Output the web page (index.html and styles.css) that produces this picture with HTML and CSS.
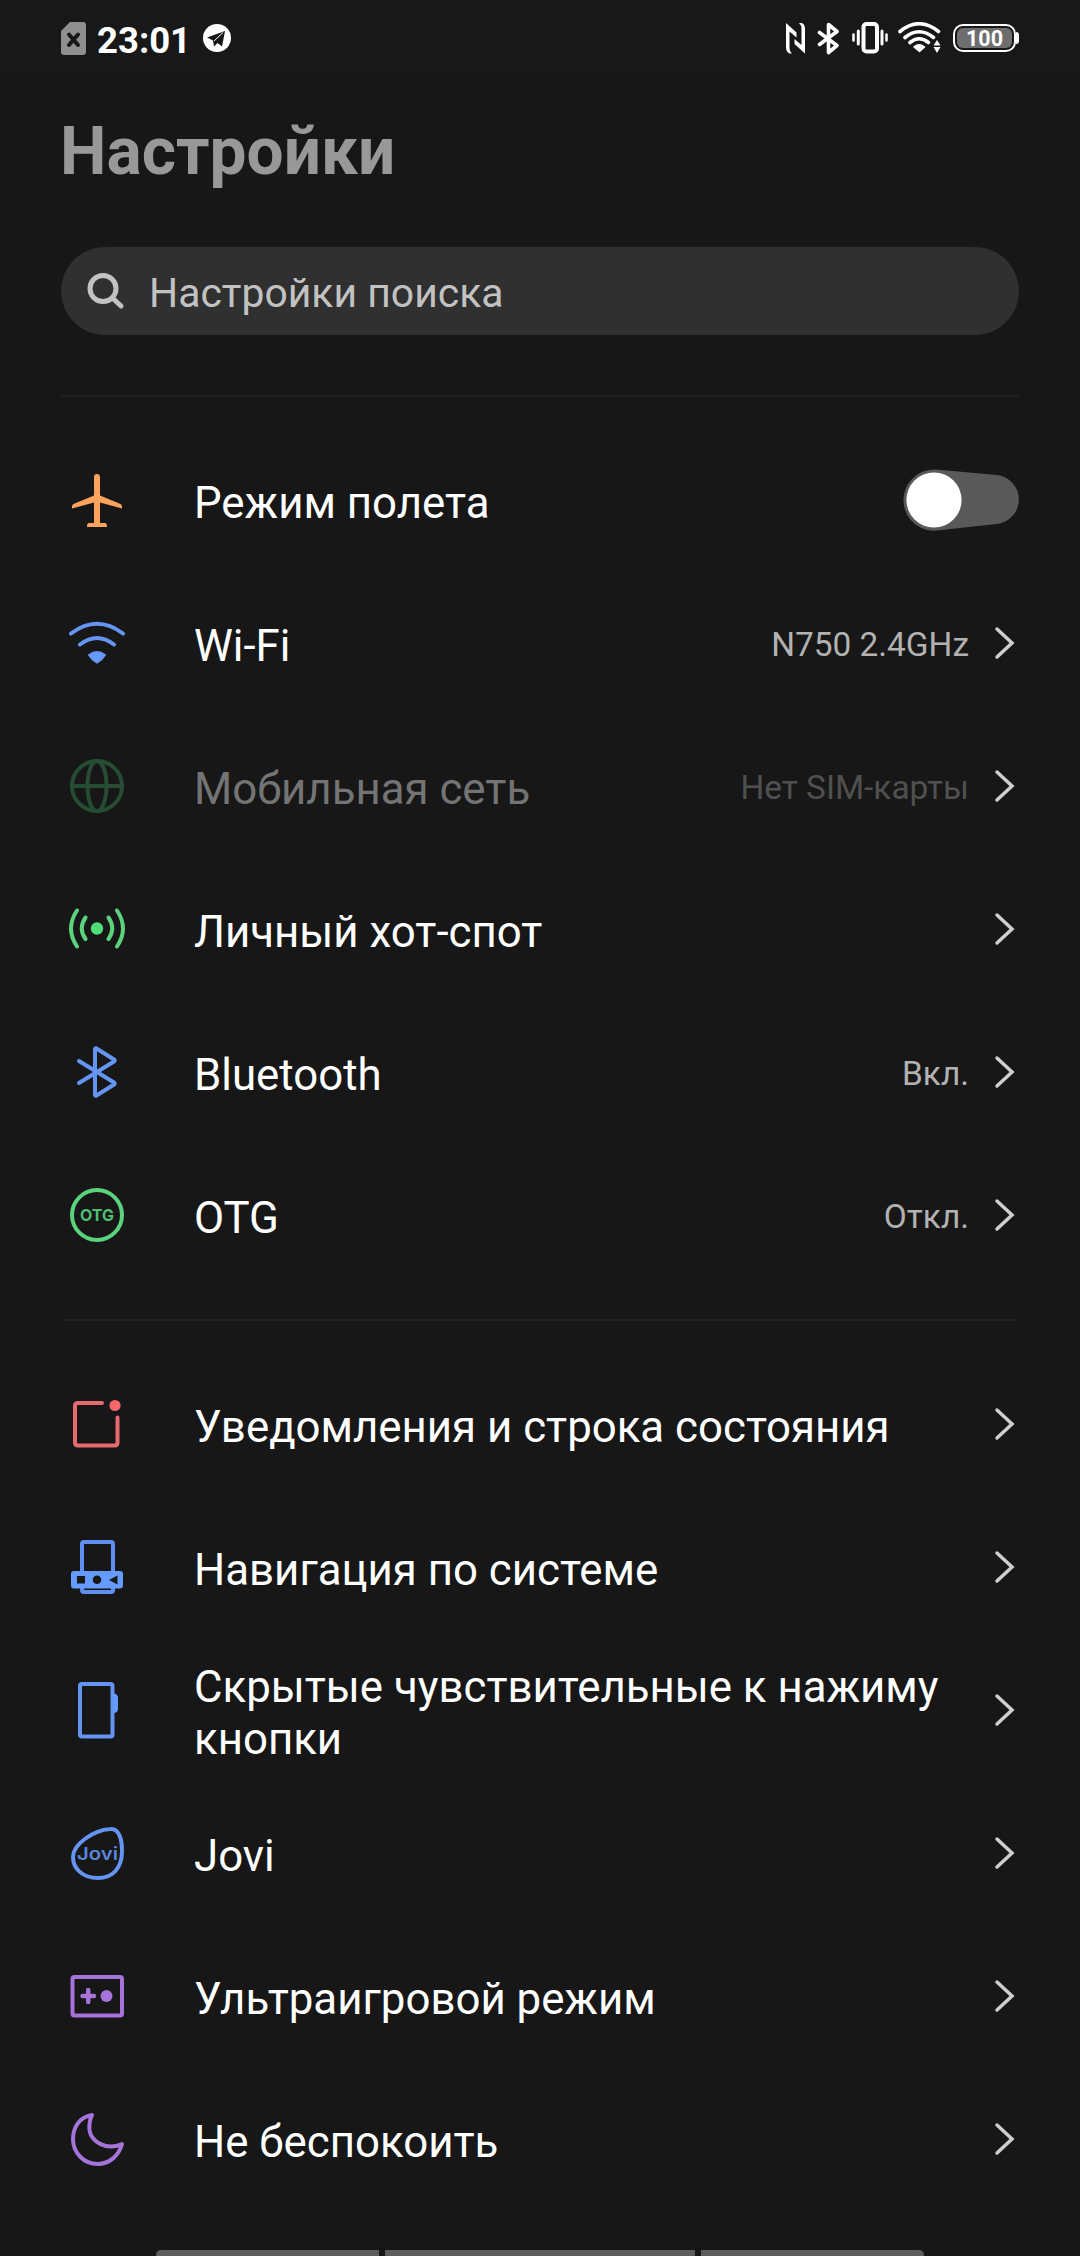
FILE: index.html
```html
<!DOCTYPE html>
<html lang="ru">
<head>
    <meta charset="UTF-8">
    <title>Настройки</title>
    <link rel="stylesheet" href="styles.css">
</head>
<body>
    <svg class="defs" width="0" height="0">
        <symbol id="arrow" viewBox="0 0 24 36"><path d="M4 4L19 18L4 32" fill="none" stroke="#cfcfcf" stroke-width="3.500" stroke-linecap="round" stroke-linejoin="miter"/></symbol>
    </svg>
    <div class="status">
        <svg class="sim" width="25" height="33" viewBox="0 0 25 33"><path d="M9 0H22Q25 0 25 3V30Q25 33 22 33H3Q0 33 0 30V9Z" fill="#8f8f8f"/><path d="M8 12.500L17 23M17 12.500L8 23" stroke="#181818" stroke-width="4" stroke-linecap="round"/></svg>
        <span class="time">23:01</span>
        <svg class="tg" width="28" height="28" viewBox="0 0 28 28"><circle cx="14" cy="14" r="14" fill="#fff"/><path d="M4 13.500L22 7L19 22.500L14.500 19L11 22.500L10 16.500Z" fill="#181818"/><path d="M11 17L20 8.500" stroke="#fff" stroke-width="1"/></svg>
        <div class="tray">
            <svg width="20" height="31" viewBox="0 0 20 31" fill="#fff"><path d="M0 0L10.500 9.500V14.500L3.500 8.500V24Q3.500 28.500 6 30.500H3.500Q0 29 0 24ZM19 30.500L8.500 21V16L15.500 22V6Q15.500 2 13 0H15.500Q19 1 19 6Z"/></svg>
            <svg class="t-bt" width="23" height="33" viewBox="0 0 23 33" fill="none" stroke="#fff" stroke-width="3.600" stroke-linejoin="round" stroke-linecap="round"><path d="M2.500 10.500L20 23.500L11.500 30.500V2.500L20 9.500L2.500 22.500"/></svg>
            <svg class="t-vib" width="36" height="32" viewBox="0 0 36 32" fill="none" stroke="#fff" stroke-linecap="round"><rect x="11.500" y="2" width="13.500" height="27.500" rx="3" stroke-width="4"/><path d="M6.300 9V22M30 9V22" stroke-width="3"/><path d="M1.500 12.500V18.500M34.500 12.500V18.500" stroke-width="2.500"/></svg>
            <svg class="t-wifi" width="43" height="32" viewBox="0 0 43 32" fill="none" stroke="#fff" stroke-width="3.600" stroke-linecap="round"><path d="M2 9.500Q21 -6 40.500 9.500M7 15.500Q21 4 35.500 15.500M12 20.500Q21 13 30.500 20.500"/><path d="M16 25Q21 20.500 26.500 25L21.500 29.500Z" fill="#fff" stroke-width="1.500" stroke-linejoin="round"/><path d="M39 18L42.500 23.500H35.500ZM39 31L35.500 25H42.500Z" fill="#fff" stroke="none"/></svg>
            <div class="battery"><span class="level">100</span></div>
            <div class="cap"></div>
        </div>
    </div>
    <h1 class="title">Настройки</h1>
    <div class="search">
        <svg width="38" height="38" viewBox="0 0 38 38" fill="none" stroke="#c2c2c2" stroke-linecap="round"><circle cx="16" cy="16.500" r="13" stroke-width="5"/><path d="M26 26.500L34 34" stroke-width="5"/></svg>
        <span class="search_text">Настройки поиска</span>
    </div>
    <div class="group">
        <div class="row">
            <svg class="icon" viewBox="0 0 60 60" fill="#fca45c"><path d="M27 7Q27 4 30 4Q33 4 33 7V25.500L53.500 34Q55.500 35 55 38.500L33 32.500V53H38Q40 53 40 57H20Q20 53 22 53H27V32.500L5 38.500Q4.500 35 6.500 34L27 25.500Z"/></svg>
            <span class="name">Режим полета</span>
            <svg class="switch" width="117" height="62" viewBox="0 0 117 62"><path d="M31 0.500Q34 0.500 36 .700L93.500 6A24.600 24.600 0 0 1 93.500 55L36 61.300A30.600 30.600 0 1 1 31 .500Z" fill="#595959"/><circle cx="31" cy="31" r="27.600" fill="#fff"/></svg>
        </div>
        <div class="row">
            <svg class="icon" viewBox="0 0 60 60" fill="none" stroke="#6594f3" stroke-width="4" stroke-linecap="round"><path d="M4 20.500Q30 1 56 20.500M13 31.500Q30 18.500 47 31.500"/><path d="M22 42Q30 36 38 42Q35 47 30 49.500Q25 47 22 42Z" fill="#659bff" stroke-width="2" stroke-linejoin="round"/></svg>
            <span class="name">Wi-Fi</span>
            <span class="value">N750 2.4GHz</span>
            <svg class="arrow"><use href="#arrow"/></svg>
        </div>
        <div class="row off">
            <svg class="icon" viewBox="0 0 60 60" fill="none" stroke="#264c33" stroke-width="4"><circle cx="30" cy="30" r="25"/><ellipse cx="30" cy="30" rx="9.500" ry="25"/><path d="M5 30H55"/></svg>
            <span class="name">Мобильная сеть</span>
            <span class="value">Нет SIM-карты</span>
            <svg class="arrow"><use href="#arrow"/></svg>
        </div>
        <div class="row">
            <svg class="icon" viewBox="0 0 60 60" fill="none" stroke="#5bd27c" stroke-width="4" stroke-linecap="round"><circle cx="30" cy="29.500" r="6.200" fill="#4fdd78" stroke="none"/><path d="M10 11.500Q-2 29.500 10 47.500M50 11.500Q62 29.500 50 47.500M18.500 18.500Q11 29.500 18.500 40M41.500 18.500Q49 29.500 41.500 40"/></svg>
            <span class="name">Личный хот-спот</span>
            <svg class="arrow"><use href="#arrow"/></svg>
        </div>
        <div class="row">
            <svg class="icon" viewBox="0 0 60 60" fill="none" stroke="#6594f3" stroke-width="4" stroke-linecap="round" stroke-linejoin="round"><path d="M12 19L47 40.500Q48.500 41.500 47 42.500L29.500 53.500Q28 54 28 52.500V7.500Q28 6 29.500 6.500L47 17.500Q48.500 18.500 47 19.500L12 41"/></svg>
            <span class="name">Bluetooth</span>
            <span class="value">Вкл.</span>
            <svg class="arrow"><use href="#arrow"/></svg>
        </div>
        <div class="row">
            <svg class="icon" viewBox="0 0 60 60"><circle cx="30" cy="30" r="25" fill="none" stroke="#5bd27c" stroke-width="4"/><text class="otg" x="30" y="35.700" textLength="34" lengthAdjust="spacingAndGlyphs">OTG</text></svg>
            <span class="name">OTG</span>
            <span class="value">Откл.</span>
            <svg class="arrow"><use href="#arrow"/></svg>
        </div>
    </div>
    <div class="group">
        <div class="row">
            <svg class="icon" viewBox="0 0 60 60" fill="none" stroke="#e76a70" stroke-width="4" stroke-linecap="round"><path d="M35 9H11Q8 9 8 12V48.500Q8 51.500 11 51.500H47.500Q50.500 51.500 50.500 48.500V23.500"/><circle cx="48" cy="11.500" r="5.600" fill="#f7666d" stroke="none"/></svg>
            <span class="name">Уведомления и строка состояния</span>
            <svg class="arrow"><use href="#arrow"/></svg>
        </div>
        <div class="row">
            <svg class="icon" viewBox="0 0 60 60"><rect x="15" y="5" width="31" height="50" rx="2" fill="none" stroke="#5f8ff3" stroke-width="4"/><rect x="4" y="34" width="52" height="17.500" rx="3" fill="#659bff"/><path d="M10 39H18V46.500H10ZM50.500 38.500V47.500L42 43Z" fill="#181818"/><circle cx="30" cy="42.800" r="4.300" fill="#181818"/></svg>
            <span class="name">Навигация по системе</span>
            <svg class="arrow"><use href="#arrow"/></svg>
        </div>
        <div class="row">
            <svg class="icon" viewBox="0 0 60 60"><rect x="13" y="4" width="32.500" height="52.500" rx="2" fill="none" stroke="#6594f3" stroke-width="4"/><path d="M46 13.500Q51 13.500 51 18V29Q51 33 46 33Z" fill="#659bff"/></svg>
            <span class="name">Скрытые чувствительные к нажиму кнопки</span>
            <svg class="arrow"><use href="#arrow"/></svg>
        </div>
        <div class="row">
            <svg class="icon" viewBox="0 0 60 60"><path d="M43 6C52 5 55 16 55 28C55 46 45 55 31 55C15 55 6 45 6 34C6 21 27 7 43 6Z" fill="none" stroke="#6594f3" stroke-width="4"/><text class="jovi" x="30.500" y="37" textLength="41" lengthAdjust="spacingAndGlyphs">Jovi</text></svg>
            <span class="name">Jovi</span>
            <svg class="arrow"><use href="#arrow"/></svg>
        </div>
        <div class="row">
            <svg class="icon" viewBox="0 0 60 60" stroke="#a573da"><rect x="5.500" y="11" width="49.500" height="38.500" rx="2" fill="none" stroke-width="4"/><path d="M15.500 30H27M21.200 24V36" stroke-width="4.500" stroke-linecap="round"/><circle cx="39.500" cy="30" r="6" fill="#a573da" stroke="none"/></svg>
            <span class="name">Ультраигровой режим</span>
            <svg class="arrow"><use href="#arrow"/></svg>
        </div>
        <div class="row">
            <svg class="icon" viewBox="0 0 60 60" fill="none" stroke="#a573da" stroke-width="4" stroke-linejoin="round"><path d="M25 6C12 8 6 19 6 30C6 44 17 55 30.500 55C43 55 52 46 55 35C40 42 24 33 22.500 21C22 15 23 10 25 6Z"/></svg>
            <span class="name">Не беспокоить</span>
            <svg class="arrow"><use href="#arrow"/></svg>
        </div>
    </div>
    <div class="navbar"><i class="side left"></i><i class="mid"></i><i class="side right"></i></div>
</body>
</html>
```
FILE: styles.css
```css
*{box-sizing:border-box;}
body{margin:0;padding:0;width:1080px;height:2256px;overflow:hidden;display:flex;flex-direction:column;background-color:#171717;color:#fff;font-family:Roboto,'Noto Sans',sans-serif;}
svg{display:block;flex:none;}
.defs{position:absolute;}
.status{height:77px;padding:0 61px;display:flex;align-items:center;background-color:#181818;}
.time{margin-left:11px;padding-top:3px;width:93px;font-size:36.500px;font-weight:700;}
.tg{margin-left:13px;}
.sim,.tg,.tray{margin-bottom:1px;}
.tray{margin-left:auto;display:flex;align-items:center;}
.t-bt{margin-left:11px;}
.t-vib{margin-left:12px;}
.t-wifi{margin-left:10px;}
.battery{width:63px;height:28px;margin-left:12px;padding:2px;border:2px solid #fff;border-radius:10px;}
.level{display:block;height:20px;border-radius:6px;background-color:#6e6e6e;font-size:21.500px;line-height:21px;font-weight:700;text-align:center;}
.cap{width:3px;height:12px;background-color:#fff;border-radius:0 3px 3px 0;}
.title{margin:36px 0 0 60px;height:134px;font-size:65.800px;line-height:77px;font-weight:700;color:#989898;}
.search{margin:0 61px;height:88px;padding-left:26px;display:flex;align-items:center;flex:none;border-radius:44px;background-color:#303030;}
.search_text{margin-left:24px;padding-top:3px;font-size:40.900px;color:#c2c2c2;}
.group{margin:60px 61px 0;padding-top:31px;border-top:2px solid #202020;}
.group+.group{margin-top:33px;}
.row{height:143px;display:flex;align-items:center;}
.icon{width:60px;height:60px;margin-left:6px;}
.name{flex:1;margin-left:67px;padding-top:7px;font-size:43.800px;line-height:52px;}
.value{padding-top:3px;margin-right:24px;font-size:33.400px;color:#b2b2b2;}
.off .name{color:#747474;}
.off .value{color:#505050;}
.switch{margin-right:-1px;}
.arrow{width:24px;height:36px;margin-right:2px;}
.otg{font-family:Inter,sans-serif;font-size:16.500px;font-weight:700;fill:#4fbf72;text-anchor:middle;}
.jovi{font-family:Inter,sans-serif;font-size:17.500px;font-weight:600;fill:#5b86dc;text-anchor:middle;}
.navbar{margin-top:auto;height:6px;padding:0 156px;display:flex;gap:6px;}
.navbar i{background-color:#5c5c5c;}
.side{width:223px;}
.mid{flex:1;}
.left{border-top-left-radius:5px;}
.right{border-top-right-radius:5px;}
```
